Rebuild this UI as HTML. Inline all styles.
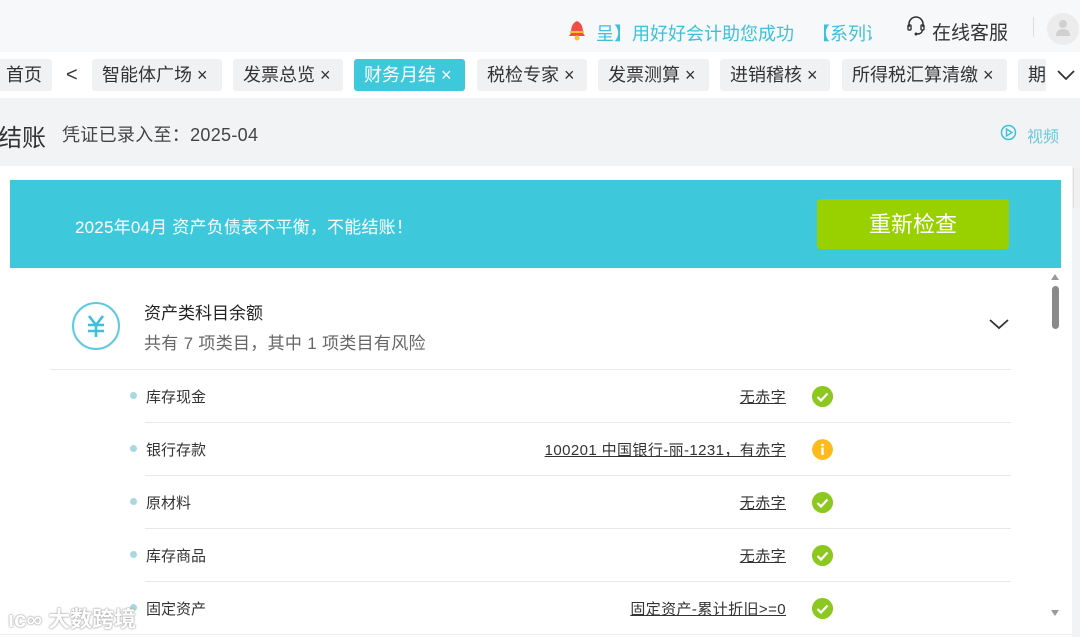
<!DOCTYPE html>
<html><head><meta charset="utf-8"><style>
*{margin:0;padding:0;box-sizing:border-box}
body{width:1080px;height:637px;overflow:hidden;background:#f2f3f5;font-family:"Liberation Sans","Noto Sans CJK SC",sans-serif;position:relative;color:#333}
.abs{position:absolute}
.top{left:0;top:0;width:1080px;height:52px;background:#f7f8fa}
.tabs{left:0;top:52px;width:1080px;height:46px;background:#fff}
.tab{position:absolute;top:7px;height:32px;background:#f0f1f3;border-radius:3px;font-size:18px;line-height:32px;color:#333;white-space:nowrap;overflow:hidden;padding-left:10px}
.tab.on{background:#3ec8dc;color:#fff}
.panel{left:0;top:166px;width:1072px;height:471px;background:#fff}
.banner{left:10px;top:180px;width:1051px;height:88px;background:#3ec8dc}
.row{position:absolute;left:0;width:1060px;height:53px}
.row .dot{position:absolute;left:130px;top:22px;width:7px;height:7px;border-radius:50%;background:#a8d8e0}
.row .n{position:absolute;left:146px;top:16px;font-size:15px;color:#333}
.row .v{position:absolute;right:274px;top:16px;font-size:15px;color:#333;text-decoration:underline;white-space:nowrap;letter-spacing:0.4px}
.row .ic{position:absolute;left:812px;top:16px;width:21px;height:21px;border-radius:50%;background:#8cc820}
.sep{position:absolute;height:1px;background:#e8e8e8}
</style></head><body>
<div class="abs top"></div>
<svg class="abs" style="left:566px;top:20px" width="22" height="22" viewBox="0 0 22 22"><path d="M11 1 C6 3 5 8 5 13 L3 16 L19 16 L17 13 C17 8 16 3 11 1Z" fill="#f24b4b"/><rect x="4" y="11" width="14" height="2" fill="#ffc02a"/><circle cx="11" cy="18" r="2.5" fill="#ffc02a"/></svg>
<div class="abs" style="left:596px;top:20px;font-size:18px;color:#3ec0d8;white-space:nowrap">呈】用好好会计助您成功</div>
<div class="abs" style="left:812px;top:20px;width:60px;overflow:hidden;font-size:18px;color:#3ec0d8;white-space:nowrap">【系列课</div>
<svg class="abs" style="left:906px;top:15px" width="20" height="22" viewBox="0 0 20 22"><path d="M3 12 V9 a7 7 0 0 1 14 0 V12" fill="none" stroke="#333" stroke-width="1.6"/><rect x="2" y="10" width="3" height="5" rx="1" fill="none" stroke="#333" stroke-width="1.4"/><rect x="15" y="10" width="3" height="5" rx="1" fill="none" stroke="#333" stroke-width="1.4"/><path d="M16.5 15 Q16 19 11 19" fill="none" stroke="#333" stroke-width="1.4"/><circle cx="10" cy="19" r="1.5" fill="#333"/></svg>
<div class="abs" style="left:932px;top:18px;font-size:19px;color:#333">在线客服</div>
<div class="abs" style="left:1033px;top:17px;width:1px;height:20px;background:#ddd"></div>
<div class="abs" style="left:1047px;top:13px;width:32px;height:32px;border-radius:50%;background:#ececec"></div>
<svg class="abs" style="left:1054px;top:18px" width="18" height="20" viewBox="0 0 18 20"><circle cx="9" cy="6" r="4" fill="#d0d0d0"/><path d="M2 18 Q2 11 9 11 Q16 11 16 18Z" fill="#d0d0d0"/></svg>

<div class="abs tabs">
<div class="tab" style="left:-4px;width:56px">首页</div>
<div class="abs" style="left:66px;top:7px;font-size:20px;line-height:32px;color:#333">&lt;</div>
<div class="tab" style="left:92px;width:130px">智能体广场 ×</div>
<div class="tab" style="left:233px;width:110px">发票总览 ×</div>
<div class="tab on" style="left:354px;width:111px">财务月结 ×</div>
<div class="tab" style="left:477px;width:110px">税检专家 ×</div>
<div class="tab" style="left:598px;width:111px">发票测算 ×</div>
<div class="tab" style="left:720px;width:110px">进销稽核 ×</div>
<div class="tab" style="left:842px;width:165px">所得税汇算清缴 ×</div>
<div class="tab" style="left:1018px;width:30px">期</div>
<div class="abs" style="left:1046px;top:0;width:34px;height:46px;background:#fff"></div>
<svg class="abs" style="left:1056px;top:16px" width="20" height="14" viewBox="0 0 20 14"><path d="M2 3 L10 11 L18 3" fill="none" stroke="#333" stroke-width="1.8"/></svg>
</div>

<div class="abs" style="left:-2px;top:118px;font-size:24px;color:#333">结账</div>
<div class="abs" style="left:62px;top:121px;font-size:18px;color:#444;letter-spacing:0.3px">凭证已录入至：2025-04</div>
<svg class="abs" style="left:1000px;top:124px" width="17" height="17" viewBox="0 0 17 17"><circle cx="8.5" cy="8.5" r="7" fill="none" stroke="#3ec0d8" stroke-width="1.5"/><path d="M6.5 5 L12 8.5 L6.5 12Z" fill="none" stroke="#3ec0d8" stroke-width="1.4"/></svg>
<div class="abs" style="left:1027px;top:123px;font-size:16px;color:#6cc8dc">视频</div>

<div class="abs panel"></div>
<div class="abs" style="left:1073px;top:168px;width:7px;height:40px;background:#f0f0f0;border-left:1px solid #ddd"></div>
<div class="abs banner"></div>
<div class="abs" style="left:75px;top:213px;font-size:17px;color:#fff;letter-spacing:0.2px">2025年04月 资产负债表不平衡，不能结账！</div>
<div class="abs" style="left:817px;top:199px;width:192px;height:50px;background:#99d000;border-radius:3px;color:#fff;font-size:22px;text-align:center;line-height:52px">重新检查</div>

<div class="abs" style="left:72px;top:302px;width:48px;height:48px;border-radius:50%;border:2px solid #5ccbe0"></div>
<svg class="abs" style="left:72px;top:302px" width="48" height="48" viewBox="0 0 48 48"><path d="M17 14 L24 23 L31 14 M24 23 V35 M16 23 H32 M16 29 H32" fill="none" stroke="#3ec0d8" stroke-width="2.6"/></svg>
<div class="abs" style="left:144px;top:299px;font-size:17px;color:#222">资产类科目余额</div>
<div class="abs" style="left:144px;top:329px;font-size:17px;color:#666;letter-spacing:0.3px">共有 7 项类目，其中 1 项类目有风险</div>
<svg class="abs" style="left:988px;top:317px" width="22" height="14" viewBox="0 0 22 14"><path d="M2 3 L11 11 L20 3" fill="none" stroke="#333" stroke-width="1.8"/></svg>
<div class="sep" style="left:50px;top:369px;width:961px"></div>

<svg width="0" height="0" style="position:absolute"><defs><symbol id="ck" viewBox="0 0 21 21"><circle cx="10.5" cy="10.5" r="10.5" fill="#8cc820"/><path d="M5.5 11 L9 14.5 L15.5 7.5" fill="none" stroke="#fff" stroke-width="2.2"/></symbol></defs></svg>

<div class="row" style="top:370px"><div class="dot"></div><div class="n">库存现金</div><div class="v">无赤字</div><svg class="ic" viewBox="0 0 21 21"><use href="#ck"/></svg></div>
<div class="sep" style="left:145px;top:422px;width:866px"></div>
<div class="row" style="top:423px"><div class="dot"></div><div class="n">银行存款</div><div class="v">100201 中国银行-丽-1231，有赤字</div><svg class="ic" style="background:none" viewBox="0 0 21 21"><circle cx="10.5" cy="10.5" r="10.5" fill="#ffbb1e"/><circle cx="10.5" cy="6" r="1.4" fill="#fff"/><rect x="9.3" y="8.5" width="2.4" height="7.5" fill="#fff"/></svg></div>
<div class="sep" style="left:145px;top:475px;width:866px"></div>
<div class="row" style="top:476px"><div class="dot"></div><div class="n">原材料</div><div class="v">无赤字</div><svg class="ic" viewBox="0 0 21 21"><use href="#ck"/></svg></div>
<div class="sep" style="left:145px;top:528px;width:866px"></div>
<div class="row" style="top:529px"><div class="dot"></div><div class="n">库存商品</div><div class="v">无赤字</div><svg class="ic" viewBox="0 0 21 21"><use href="#ck"/></svg></div>
<div class="sep" style="left:145px;top:581px;width:866px"></div>
<div class="row" style="top:582px"><div class="dot"></div><div class="n">固定资产</div><div class="v">固定资产-累计折旧&gt;=0</div><svg class="ic" viewBox="0 0 21 21"><use href="#ck"/></svg></div>
<div class="sep" style="left:0;top:634px;width:1072px;background:#eee"></div>

<div class="abs" style="left:1051px;top:274px;width:0;height:0;border-left:4px solid transparent;border-right:4px solid transparent;border-bottom:6px solid #999"></div>
<div class="abs" style="left:1052px;top:286px;width:7px;height:43px;border-radius:4px;background:#8a8a8a"></div>
<div class="abs" style="left:1051px;top:610px;width:0;height:0;border-left:4px solid transparent;border-right:4px solid transparent;border-top:6px solid #999"></div>

<div class="abs" style="left:8px;top:602px;font-size:22px;color:#fff;text-shadow:0 0 2px #999,0 0 1px #888;font-weight:bold;white-space:nowrap">ιᴄ∞ 大数跨境</div>
</body></html>
